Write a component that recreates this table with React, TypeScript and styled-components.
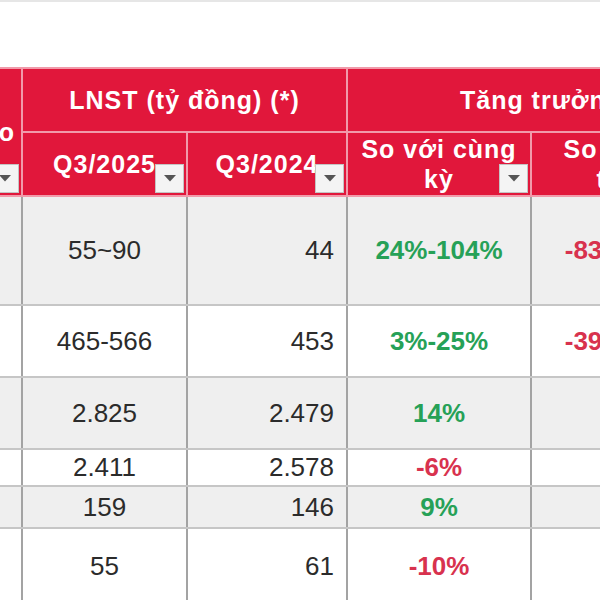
import styled, { createGlobalStyle } from "styled-components";

const GlobalStyle = createGlobalStyle`
  html, body {
    margin: 0;
    padding: 0;
    background: #ffffff;
  }
  body {
    font-family: "Liberation Sans", Arial, sans-serif;
  }
`;

type Row = {
  shade: boolean;
  h: number;
  cur: string;
  prev: string;
  yoy: string;
  yoyUp: boolean;
  qoq?: string;
};

const rows: Row[] = [
  { shade: true, h: 109, cur: "55~90", prev: "44", yoy: "24%-104%", yoyUp: true, qoq: "-83%~-73%" },
  { shade: false, h: 72, cur: "465-566", prev: "453", yoy: "3%-25%", yoyUp: true, qoq: "-39%~-26%" },
  { shade: true, h: 72, cur: "2.825", prev: "2.479", yoy: "14%", yoyUp: true },
  { shade: false, h: 37, cur: "2.411", prev: "2.578", yoy: "-6%", yoyUp: false },
  { shade: true, h: 42, cur: "159", prev: "146", yoy: "9%", yoyUp: true },
  { shade: false, h: 76, cur: "55", prev: "61", yoy: "-10%", yoyUp: false },
];

const FilterButton = () => (
  <Filter>
    <svg width="12" height="7" viewBox="0 0 12 7">
      <path d="M0 0 L12 0 L6 6.5 Z" fill="#555" />
    </svg>
  </Filter>
);

const App = () => {
  return (
    <Frame>
      <GlobalStyle />
      <TopStrip />
      <Sheet>
        <colgroup>
          <col style={{ width: 140 }} />
          <col style={{ width: 165 }} />
          <col style={{ width: 160 }} />
          <col style={{ width: 184 }} />
          <col style={{ width: 204 }} />
        </colgroup>
        <thead>
          <HeadRow h={64}>
            <HeadCell rowSpan={2} align="right">
              Dự báo
              <FilterButton />
            </HeadCell>
            <HeadCell colSpan={2}>LNST (tỷ đồng) (*)</HeadCell>
            <HeadCell colSpan={2}>Tăng trưởng</HeadCell>
          </HeadRow>
          <HeadRow h={64}>
            <HeadCell>
              Q3/2025
              <FilterButton />
            </HeadCell>
            <HeadCell>
              Q3/2024
              <FilterButton />
            </HeadCell>
            <HeadCell>
              So với cùng kỳ
              <FilterButton />
            </HeadCell>
            <HeadCell>
              So với quý trước
              <FilterButton />
            </HeadCell>
          </HeadRow>
        </thead>
        <tbody>
          {rows.map((r, i) => (
            <BodyRow key={i} shade={r.shade} h={r.h}>
              <Cell />
              <Cell>{r.cur}</Cell>
              <Cell align="right">{r.prev}</Cell>
              <Pct up={r.yoyUp}>{r.yoy}</Pct>
              <Pct up={false}>{r.qoq ?? ""}</Pct>
            </BodyRow>
          ))}
        </tbody>
      </Sheet>
    </Frame>
  );
};

export default App;

const Frame = styled.div`
  width: 600px;
  height: 600px;
  overflow: hidden;
  background: #ffffff;
`;

const TopStrip = styled.div`
  height: 67px;
  border-top: 2px solid #e6e6e6;
  box-sizing: border-box;
`;

const Sheet = styled.table`
  margin-left: -119px;
  border-collapse: collapse;
  table-layout: fixed;
  width: 853px;
`;

const HeadRow = styled.tr<{ h: number }>`
  height: ${({ h }) => h}px;
`;

const HeadCell = styled.th<{ align?: string }>`
  position: relative;
  background: #e1173b;
  color: #ffffff;
  font-size: 25px;
  font-weight: 700;
  letter-spacing: 1px;
  line-height: 30px;
  text-align: ${({ align }) => align || "center"};
  padding: 0 6px;
  border: 2px solid #f19aaa;
  vertical-align: middle;
`;

const Filter = styled.span`
  position: absolute;
  right: 2px;
  bottom: 2px;
  width: 29px;
  height: 29px;
  box-sizing: border-box;
  background: #f4f4f4;
  border: 1px solid #c4c4c4;
  display: flex;
  align-items: center;
  justify-content: center;
`;

const BodyRow = styled.tr<{ shade: boolean; h: number }>`
  height: ${({ h }) => h}px;
  background: ${({ shade }) => (shade ? "#efefef" : "#ffffff")};
`;

const Cell = styled.td<{ align?: string }>`
  font-size: 26px;
  color: #2b2b2b;
  text-align: ${({ align }) => align || "center"};
  padding: 0 12px;
  border-top: 2px solid #c6c6c6;
  border-bottom: 2px solid #c6c6c6;
  border-left: 2px solid #a3a3a3;
  border-right: 2px solid #a3a3a3;
  vertical-align: middle;
`;

const Pct = styled(Cell)<{ up: boolean }>`
  font-weight: 700;
  color: ${({ up }) => (up ? "#26a157" : "#d8324e")};
`;
